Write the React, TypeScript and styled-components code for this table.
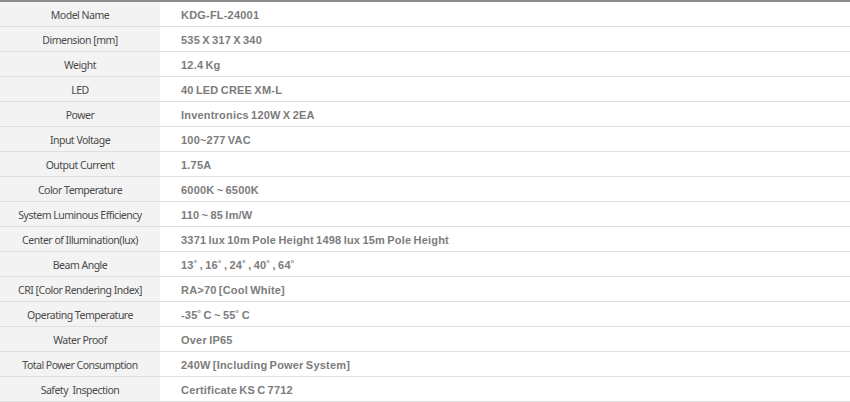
import styled, { createGlobalStyle } from "styled-components";

const GlobalStyle = createGlobalStyle`
  html, body {
    margin: 0;
    padding: 0;
    background: #ffffff;
  }
`;

const specs: [string, string][] = [
  ["Model Name", "KDG-FL-24001"],
  ["Dimension [mm]", "535 X 317 X 340"],
  ["Weight", "12.4 Kg"],
  ["LED", "40 LED CREE XM-L"],
  ["Power", "Inventronics 120W X 2EA"],
  ["Input Voltage", "100~277 VAC"],
  ["Output Current", "1.75A"],
  ["Color Temperature", "6000K ~ 6500K"],
  ["System Luminous Efficiency", "110 ~ 85 lm/W"],
  ["Center of Illumination(lux)", "3371 lux 10m Pole Height 1498 lux 15m Pole Height"],
  ["Beam Angle", "13˚ , 16˚ , 24˚ , 40˚ , 64˚"],
  ["CRI [Color Rendering Index]", "RA>70 [Cool White]"],
  ["Operating Temperature", "-35˚ C ~ 55˚ C"],
  ["Water Proof", "Over IP65"],
  ["Total Power Consumption", "240W [Including Power System]"],
  ["Safety  Inspection", "Certificate KS C 7712"],
];

export default function App() {
  return (
    <>
      <GlobalStyle />
      <SpecTable>
        {specs.map(([label, value]) => (
          <Row key={label}>
            <Label>{label}</Label>
            <Value>{value}</Value>
          </Row>
        ))}
      </SpecTable>
    </>
  );
}

const SpecTable = styled.div`
  width: 850px;
  border-top: 2px solid #8c8c8c;
`;

const Row = styled.div`
  display: grid;
  grid-template-columns: 160px 1fr;
  height: 24px;
  border-bottom: 1px solid #dedede;
`;

const Label = styled.div`
  background: #f3f3f3;
  display: flex;
  align-items: center;
  justify-content: center;
  padding-top: 2px;
  font-family: "Noto Sans", sans-serif;
  font-size: 10.5px;
  letter-spacing: -0.5px;
  color: #4a4a4a;
  white-space: pre;
`;

const Value = styled.div`
  display: flex;
  align-items: center;
  padding: 2px 0 0 21px;
  font-family: "Liberation Sans", Arial, sans-serif;
  font-size: 11px;
  font-weight: bold;
  color: #7c7c7c;
  letter-spacing: 0.2px;
  word-spacing: -1px;
  white-space: pre;
`;
